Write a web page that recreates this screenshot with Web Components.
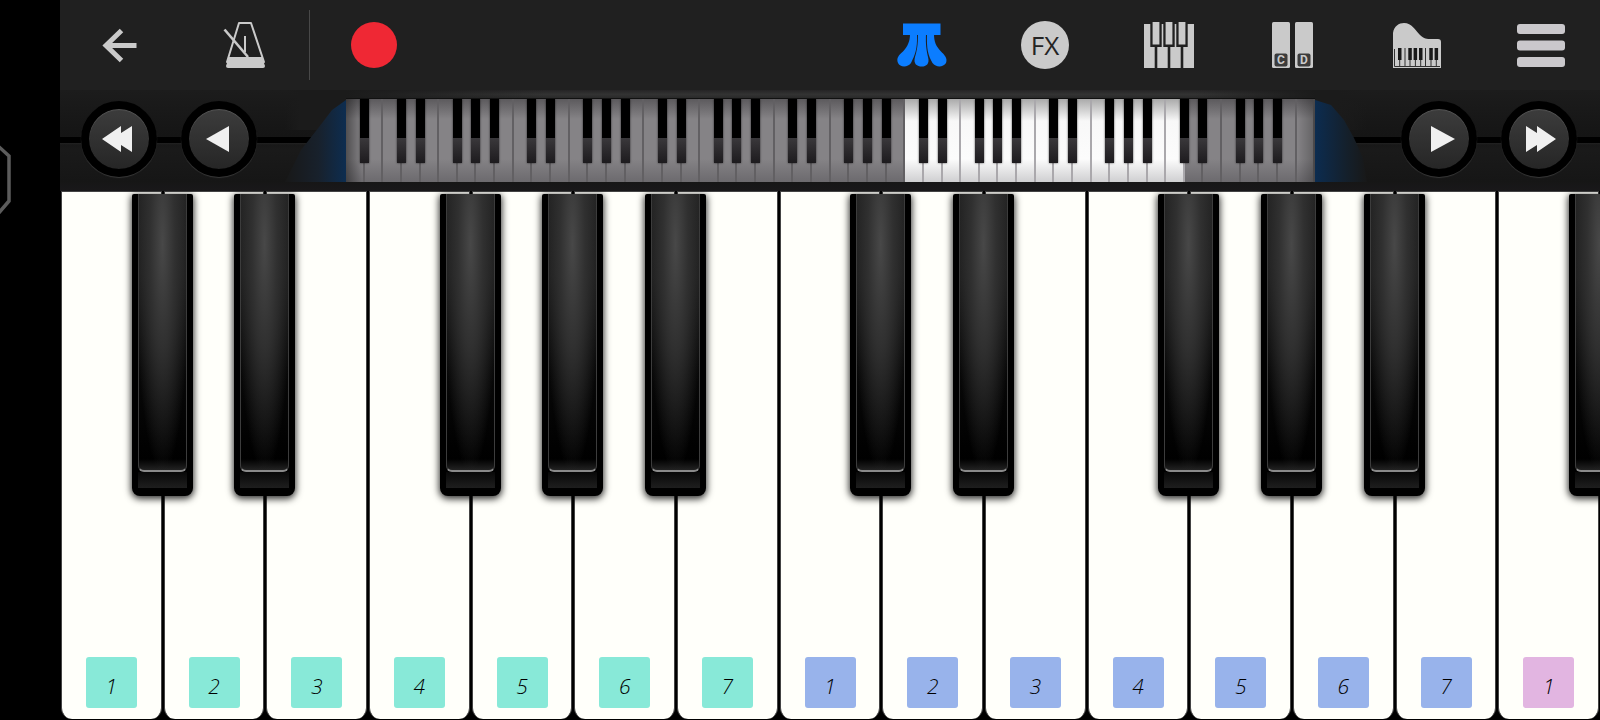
<!DOCTYPE html>
<html lang="en">
<head>
<meta charset="utf-8">
<title>Piano</title>
<style>
html,body{margin:0;height:100%;background:#000;overflow:hidden}
body{font-family:"Open Sans","Noto Sans",sans-serif}
</style>
</head>
<body>
<piano-app></piano-app>

<template id="t-app">
<style>
:host{display:flex;height:100vh;background:#000}
.rail{flex:0 0 60px;padding-top:144px;box-sizing:border-box}
.rail svg{display:block}
main{flex:1;min-width:0;display:flex;flex-direction:column}
piano-keys{flex:1}
</style>
<aside class="rail"><svg width="14" height="72" viewBox="0 0 14 72" fill="none" stroke="#5c5c5c" stroke-width="3.500"><path d="M-3 1L9 12V57L-3 71"/></svg></aside>
<main>
<tool-bar></tool-bar>
<range-bar></range-bar>
<piano-keys></piano-keys>
</main>
</template>

<template id="t-toolbar">
<style>
:host{display:flex;align-items:center;flex:0 0 90px;background:#202020}
.group{display:flex;align-items:center}
.left{gap:7px}
.right{gap:6px;margin-left:auto}
hr{width:1px;height:70px;margin:0 5px 0 6px;border:0;background:#484848}
</style>
<div class="group left">
<icon-button label="Back"><svg width="60" height="60" fill="none" stroke="#cacaca" stroke-width="5"><path d="M47.500 30.500H16M32.500 15.500L17 30.500L32.500 45.500"/></svg></icon-button>
<icon-button label="Metronome"><svg width="60" height="60" fill="none" stroke="#cacaca" stroke-width="2" stroke-linejoin="round"><path d="M25 8H37L50 47H13Z"/><path d="M15 42H48L51 51Q51 53 49 53H14Q12 53 12 51Z" fill="#cacaca" stroke="none"/><path d="M31 21V37"/><path d="M10.500 14.500L34 42" stroke-width="2.600"/></svg></icon-button>
</div>
<hr>
<icon-button label="Record"><svg width="60" height="60"><circle cx="30" cy="30" r="23" fill="#ef2834"/></svg></icon-button>
<div class="group right">
<icon-button label="Pedal"><svg width="60" height="60" fill="#0b7dff"><path d="M12 8.500H49.500V20H12Z"/><path d="M19 19H26C26.500 34 24 40 20 48C17 52.500 9 52.500 7 48C5 43 8 40 12 36.500C17 31 19 26 19 19Z"/><path d="M27 19H35C34.500 30 35.500 35 37 42C39 49 35 51.500 31 51.500C26 51.500 22 49 24 42C26 35 27 30 27 19Z"/><path d="M36 19H43C43 27 45 31 50 36.500C53 39.500 57 43 55 48C52 52.500 45 52.500 41.500 48C37 40 35.500 34 36 19Z"/></svg></icon-button>
<icon-button label="Effects" class="fx"><fx-badge>FX</fx-badge></icon-button>
<icon-button label="Keyboard layout"><svg width="60" height="60"><path fill="#cacaca" d="M5 9H55V53H5Z"/><path fill="#202020" d="M11.300 7h11.400v25h-11.400zM24.300 7h11.400v25h-11.400zM37.300 7h11.400v25h-11.400zM15.700 30h2.600v23h-2.600zM28.700 30h2.600v23h-2.600zM41.700 30h2.600v23h-2.600z"/><path fill="#cacaca" d="M13.600 7h6.800v22.500h-6.800zM26.600 7h6.800v22.500h-6.800zM39.600 7h6.800v22.500h-6.800z"/></svg></icon-button>
<icon-button label="Key labels"><svg width="60" height="60" font-family="Roboto,sans-serif" font-weight="700" font-size="12" text-anchor="middle"><g fill="#cacaca"><rect x="9" y="7" width="18" height="46" rx="1.500"/><rect x="32" y="7" width="18" height="46" rx="1.500"/></g><g fill="#3c3c3c"><rect x="11.500" y="38.500" width="13" height="13" rx="2"/><rect x="34.500" y="38.500" width="13" height="13" rx="2"/></g><g fill="#cacaca"><text x="18" y="49">C</text><text x="41" y="49">D</text></g></svg></icon-button>
<icon-button label="Instrument"><svg width="60" height="60"><path fill="#cacaca" d="M6 53V18C7 11 12 8 17 8C25 8 28 15 33 20C37 24 40 24 44 24H51Q54 24 54 27V53Z"/><path fill="#181818" d="M11 33h3.500v12h-3.500zM21.300 33h3.500v12h-3.500zM26.600 33h3.500v12h-3.500zM32 33h3.500v12h-3.500zM42.300 33h3.500v12h-3.500zM47.600 33h3.500v12h-3.500z"/><path stroke="#303030" d="M7.500 34V51.500H53M12.700 45V51M18 33V51M23 45V51M28.400 45V51M33.700 45V51M38.500 33V51M44 45V51M49.300 45V51" fill="none"/></svg></icon-button>
<icon-button label="Menu"><svg width="60" height="60" fill="#cac8cc"><rect x="6" y="9" width="48" height="10" rx="3"/><rect x="6" y="25.500" width="48" height="10" rx="3"/><rect x="6" y="42" width="48" height="10" rx="3"/></svg></icon-button>
</div>
</template>

<template id="t-icon">
<style>
:host{display:block}
button{display:flex;align-items:center;justify-content:center;width:118px;height:90px;padding:0;border:0;background:none;cursor:pointer}
</style>
<button type="button"><slot></slot></button>
</template>

<template id="t-fx">
<style>
:host{display:flex;align-items:center;justify-content:center;width:48px;height:48px;border-radius:50%;background:#cacaca;color:#242424;font:400 26px/48px "Open Sans",sans-serif}
</style>
<slot></slot>
</template>

<template id="t-round">
<style>
:host{display:block}
button{display:flex;align-items:center;justify-content:center;width:76px;height:76px;padding:0;border:8px solid #000;border-radius:50%;background:#000 linear-gradient(#3c3c3c,#262626) padding-box;box-shadow:0 1px 1px #3a3a3a,inset 0 1px 1px #555;cursor:pointer}
svg{display:block;filter:drop-shadow(-1px 2px 1px #000)}
</style>
<button type="button"><slot></slot></button>
</template>

<template id="t-range">
<style>
:host{display:flex;align-items:center;flex:0 0 101px;box-sizing:border-box;padding:0 23px 4px 21px;gap:24px;
background:linear-gradient(transparent 47px,#000 47px,#000 53px,#222 53px,transparent 55px),linear-gradient(#1c1c1c,#151515 45%,#1a1a1a 60%,#161616 90%,#19181a)}
.strip{flex:1;min-width:0;align-self:stretch;display:flex;align-items:flex-end;margin:0 10px 0 4px;padding-bottom:5px;background:linear-gradient(90deg,transparent,#1b1b1b 15px,#1b1b1b calc(100% - 30px),transparent) 0 0/100% 40px no-repeat}
.side{height:84px;flex:none}
.l{width:61px;background:linear-gradient(90deg,#181818,#18212c 55%,#0d2d50);clip-path:polygon(0 84px,16px 52px,34px 29px,47px 12px,61px 2px,61px 84px)}
.r{width:52px;background:linear-gradient(90deg,#0c2c50,#14202c 60%,#181818);clip-path:polygon(0 2px,16px 7px,29px 22px,39px 40px,48px 60px,52px 84px,0 84px)}
.mid{flex:1;min-width:0;display:flex;flex-direction:column}
.rim{height:8px;background:linear-gradient(90deg,#1b1b1b,transparent 200px calc(100% - 120px),#1b1b1b),linear-gradient(#252425,#333 55%,#2a2a2a)}
svg{display:block}
</style>
<round-button label="Previous octave"><svg width="34" height="30"><path fill="#f0f0f0" d="M0 15L19 2V9L30 2V28L19 21V28Z"/></svg></round-button>
<round-button label="Previous key"><svg width="34" height="30"><path fill="#f0f0f0" d="M4 15L27 2V28Z"/></svg></round-button>
<div class="strip"><div class="side l"></div><div class="mid"><div class="rim"></div><mini-keys></mini-keys></div><div class="side r"></div></div>
<round-button label="Next key"><svg width="34" height="30"><path fill="#f0f0f0" d="M9 2L33 15L9 28Z"/></svg></round-button>
<round-button label="Next octave"><svg width="34" height="30"><path fill="#f0f0f0" d="M4 2L15 9V2L34 15L15 28V21L4 28Z"/></svg></round-button>
</template>

<script>
const stamp = (host, id) => {
  const root = host.attachShadow({mode: 'open'});
  root.append(document.getElementById(id).content.cloneNode(true));
  return root;
};
const simple = (name, id) => customElements.define(name, class extends HTMLElement {
  constructor() {
    super();
    stamp(this, id);
  }
  connectedCallback() {
    const button = this.shadowRoot.querySelector('button');
    if (button) button.setAttribute('aria-label', this.getAttribute('label'));
  }
});

/* Overview of all 52 white keys, A0 to C8; the playable range is lit. */
customElements.define('mini-keys', class extends HTMLElement {
  constructor() {
    super();
    const sharp = [1, 0, 1, 1, 0, 1, 1];
    let keys = '';
    for (let i = 0; i < 52; i++) {
      const lit = i >= 30 && i < 45;
      keys += `<i class="${lit ? 'lit' : ''}">${sharp[i % 7] && i < 51 ? '<b></b>' : ''}</i>`;
    }
    this.attachShadow({mode: 'open'}).innerHTML = `<style>
:host{display:flex;position:relative;height:84px;overflow:hidden;border-top:1px solid #111;box-sizing:border-box}
i{flex:1;position:relative;box-sizing:border-box;border-right:2px solid #626063;background:linear-gradient(#5c5a5d,#858386 20px,#858386 60px,#6c6a6e)}
i.lit{border-right-color:#aaa8ac;background:linear-gradient(#aaa,#f8f8f8 22px,#fcfcfc 60px,#cfcfd1)}
b{position:absolute;z-index:1;top:0;right:-6px;width:9px;height:64px;background:linear-gradient(#000 39px,#3a383b 39px,#1d1b1e);box-shadow:0 0 2px #000a}
:host::after{content:"";position:absolute;inset:0;background:linear-gradient(90deg,#0006,transparent 16px calc(100% - 18px),#0004)}
</style>${keys}`;
  }
});

customElements.define('white-key', class extends HTMLElement {
  constructor() {
    super();
    this.attachShadow({mode: 'open'}).innerHTML = `<style>
:host{display:flex;flex:1;min-width:0;position:relative;padding:0 1px;box-sizing:border-box}
.white{flex:1;min-width:0;display:flex;align-items:flex-end;justify-content:center;padding:0 0 11px;border:1px solid #444;border-width:1px 1px 0;border-radius:0 0 11px 11px;background:#fffffa;cursor:pointer}
span{width:51px;height:51px;box-sizing:border-box;padding-top:8px;border-radius:3px;background:var(--tone);color:#000;font:italic 300 21px/42px "Open Sans",sans-serif;text-align:center}
.black{position:absolute;z-index:2;top:3px;right:-30px;width:61px;height:302px;display:flex;flex-direction:column;padding:0 6px 8px;border:0;border-radius:2px 2px 8px 8px;background:#000;box-shadow:0 2px 7px 1px #000c;cursor:pointer}
.black::before{content:"";flex:1;box-sizing:border-box;border:solid #3c3c3c;border-width:0 1px 2px;border-bottom-color:#8a8a8a;border-radius:0 0 6px 6px;background:radial-gradient(ellipse 28px 230px at 50% 50px,#484848,#303030 45%,transparent),linear-gradient(#202020,#1c1c1c 30%,#080808 65%,#000 96%,#222)}
.black::after{content:"";height:16px;background:linear-gradient(#080808,#1e1e1e)}
</style><button class="white" type="button"><span><slot></slot></span></button>${this.hasAttribute('sharp') ? '<button class="black" type="button" aria-label="Sharp"></button>' : ''}`;
  }
});

customElements.define('piano-keys', class extends HTMLElement {
  constructor() {
    super();
    const tones = ['#88e9d8', '#98b3eb', '#e2b5e1'];
    const sharp = [1, 1, 0, 1, 1, 1, 0];
    const keys = Array.from({length: 15}, (_, i) =>
      `<white-key style="--tone:${tones[Math.floor(i / 7)]}" ${sharp[i % 7] ? 'sharp' : ''}>${i % 7 + 1}</white-key>`).join('');
    this.attachShadow({mode: 'open'}).innerHTML = `<style>
:host{display:flex;min-height:0;overflow:hidden;background:#000;padding-bottom:1px}
</style>${keys}`;
  }
});

simple('icon-button', 't-icon');
simple('fx-badge', 't-fx');
simple('round-button', 't-round');
simple('tool-bar', 't-toolbar');
simple('range-bar', 't-range');
simple('piano-app', 't-app');
</script>
</body>
</html>
